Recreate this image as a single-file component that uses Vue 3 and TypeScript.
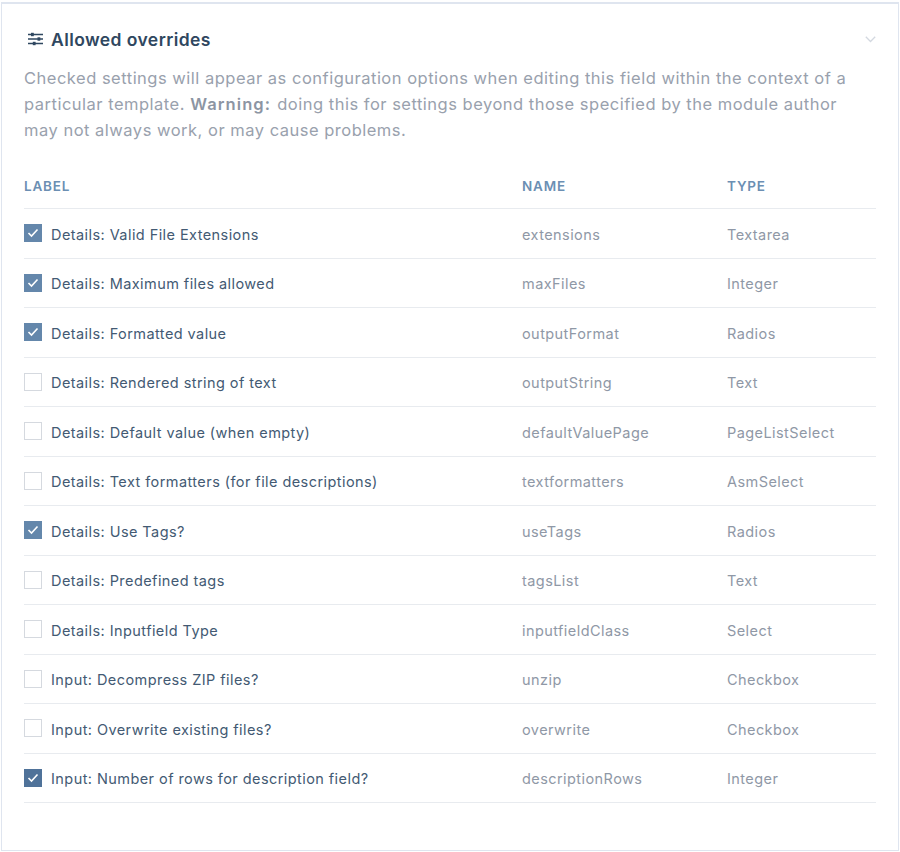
<script setup lang="ts">
interface Row { label: string; name: string; type: string; checked: boolean }
const rows: Row[] = [
  { label: 'Details: Valid File Extensions', name: 'extensions', type: 'Textarea', checked: true },
  { label: 'Details: Maximum files allowed', name: 'maxFiles', type: 'Integer', checked: true },
  { label: 'Details: Formatted value', name: 'outputFormat', type: 'Radios', checked: true },
  { label: 'Details: Rendered string of text', name: 'outputString', type: 'Text', checked: false },
  { label: 'Details: Default value (when empty)', name: 'defaultValuePage', type: 'PageListSelect', checked: false },
  { label: 'Details: Text formatters (for file descriptions)', name: 'textformatters', type: 'AsmSelect', checked: false },
  { label: 'Details: Use Tags?', name: 'useTags', type: 'Radios', checked: true },
  { label: 'Details: Predefined tags', name: 'tagsList', type: 'Text', checked: false },
  { label: 'Details: Inputfield Type', name: 'inputfieldClass', type: 'Select', checked: false },
  { label: 'Input: Decompress ZIP files?', name: 'unzip', type: 'Checkbox', checked: false },
  { label: 'Input: Overwrite existing files?', name: 'overwrite', type: 'Checkbox', checked: false },
  { label: 'Input: Number of rows for description field?', name: 'descriptionRows', type: 'Integer', checked: true },
]
</script>

<template>
  <div class="card">
    <div class="head">
      <div class="title">
        <svg class="sliders" width="15" height="14" viewBox="0 0 15 14" fill="none" stroke="#2f4760" stroke-width="1.3">
          <path d="M0 2.5H15M0 7H15M0 11.5H15" />
          <rect x="3" y="0.8" width="2.8" height="3.4" fill="#2f4760" stroke="none" />
          <rect x="9.5" y="5.3" width="2.8" height="3.4" fill="#2f4760" stroke="none" />
          <rect x="4.8" y="9.8" width="2.8" height="3.4" fill="#2f4760" stroke="none" />
        </svg>
        <h2>Allowed overrides</h2>
      </div>
      <svg class="chev" width="11" height="7" viewBox="0 0 11 7" fill="none" stroke="#d3d8e0" stroke-width="1.3">
        <path d="M0.8 0.8L5.5 5.5L10.2 0.8" />
      </svg>
    </div>
    <p class="desc">
      Checked settings will appear as configuration options when editing this field within the context of a particular template. <strong>Warning:</strong> doing this for settings beyond those specified by the module author may not always work, or may cause problems.
    </p>
    <div class="table">
      <div class="row header">
        <span>LABEL</span><span>NAME</span><span>TYPE</span>
      </div>
      <div v-for="r in rows" :key="r.name" class="row">
        <span class="label">
          <span class="box" :class="{ on: r.checked }">
            <svg v-if="r.checked" width="12" height="10" viewBox="0 0 12 10" fill="none" stroke="#fff" stroke-width="1.6">
              <path d="M1.5 5L4.5 8L10.5 1.5" />
            </svg>
          </span>
          <span class="txt">{{ r.label }}</span>
        </span>
        <span class="muted">{{ r.name }}</span>
        <span class="muted">{{ r.type }}</span>
      </div>
    </div>
  </div>
</template>

<style>
body { background: #fff; }
</style>

<style scoped>
.card {
  box-sizing: border-box;
  width: 898px;
  height: 849px;
  margin: 2px 0 0 1px;
  padding: 21px 22px 0 22px;
  border: 1px solid #dfe5ef;
  border-top-width: 2px;
  font-family: Inter, "Liberation Sans", sans-serif;
  background: #fff;
}
.head {
  display: flex;
  justify-content: space-between;
  align-items: center;
  height: 28px;
}
.title { display: flex; align-items: center; gap: 8px; margin-left: 4px; }
.sliders { display: block; }
h2 {
  margin: 0;
  font-size: 17.5px;
  font-weight: 600;
  color: #2f4760;
  letter-spacing: 0.42px;
}
.chev { margin-top: 1px; }
.desc {
  max-width: 836px;
  margin: 12px 0 0;
  font-size: 16.5px;
  line-height: 26px;
  letter-spacing: 0.5px;
  color: #99a1ad;
}
.desc strong { font-weight: 600; letter-spacing: 1.1px; margin-right: 1px; color: #8c95a3; }
.table { margin-top: 21px; }
.row {
  display: grid;
  grid-template-columns: 498px 205px 1fr;
  align-items: center;
  height: 49.5px;
  box-sizing: border-box;
  border-bottom: 1px solid #e8ebef;
  font-size: 14.5px;
  letter-spacing: 0.43px;
}
.row.header {
  height: 45px;
  align-items: start;
  padding-top: 14px;
  font-size: 13.5px;
  font-weight: 600;
  letter-spacing: 0.8px;
  color: #6c8fb3;
}
.label { display: flex; align-items: center; gap: 9px; color: #435a73; }
.txt { padding-top: 2px; }
.muted { padding-top: 2px; color: #8f98a6; }
.box {
  box-sizing: border-box;
  width: 18px;
  height: 18px;
  display: flex;
  align-items: center;
  justify-content: center;
  border: 1px solid #d5d9df;
  background: #fff;
}
.box.on { background: #6487ab; border-color: #6487ab; }
.row:last-child .box.on { background: #4f7299; border-color: #4f7299; }
</style>
